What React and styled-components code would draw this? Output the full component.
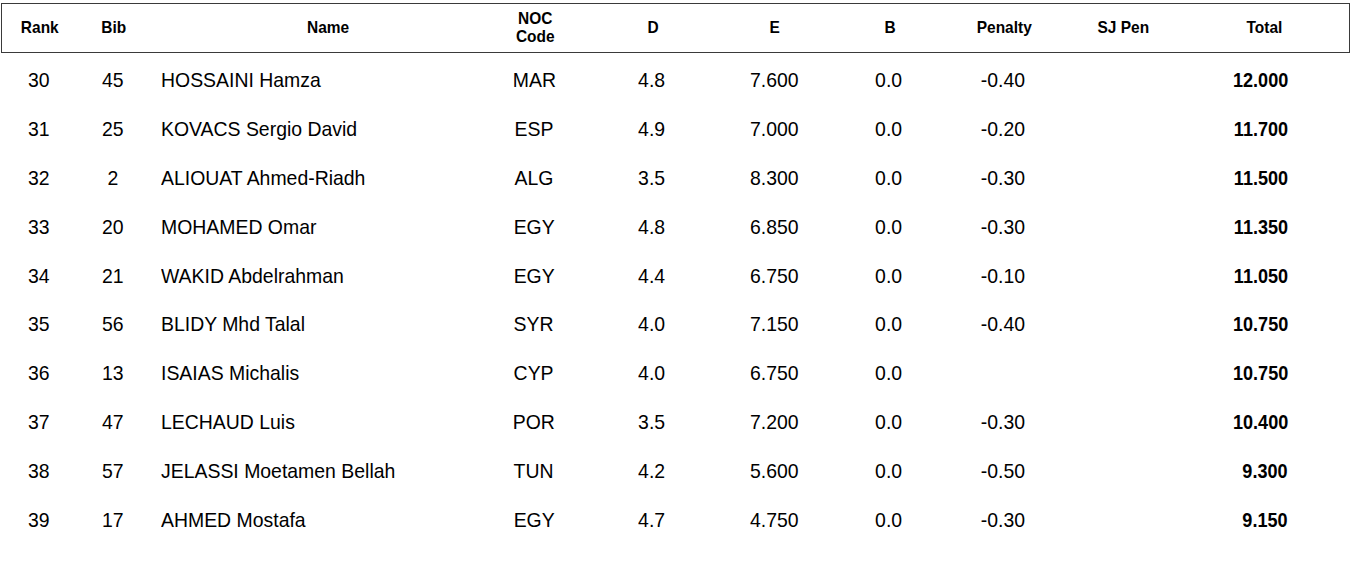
import React from "react";
import styled, { createGlobalStyle } from "styled-components";

const GlobalStyle = createGlobalStyle`
  body {
    margin: 0;
    background: #fff;
    font-family: "Liberation Sans", Arial, sans-serif;
    color: #000;
  }
`;

// column tracks, left to right (px)
const COLUMNS = "76px 72px 356px 58px 178px 66px 164px 64px 174px 1fr";

const results = [
  { rank: 30, bib: 45, name: "HOSSAINI Hamza", noc: "MAR", d: "4.8", e: "7.600", b: "0.0", pen: "-0.40", total: "12.000" },
  { rank: 31, bib: 25, name: "KOVACS Sergio David", noc: "ESP", d: "4.9", e: "7.000", b: "0.0", pen: "-0.20", total: "11.700" },
  { rank: 32, bib: 2, name: "ALIOUAT Ahmed-Riadh", noc: "ALG", d: "3.5", e: "8.300", b: "0.0", pen: "-0.30", total: "11.500" },
  { rank: 33, bib: 20, name: "MOHAMED Omar", noc: "EGY", d: "4.8", e: "6.850", b: "0.0", pen: "-0.30", total: "11.350" },
  { rank: 34, bib: 21, name: "WAKID Abdelrahman", noc: "EGY", d: "4.4", e: "6.750", b: "0.0", pen: "-0.10", total: "11.050" },
  { rank: 35, bib: 56, name: "BLIDY Mhd Talal", noc: "SYR", d: "4.0", e: "7.150", b: "0.0", pen: "-0.40", total: "10.750" },
  { rank: 36, bib: 13, name: "ISAIAS Michalis", noc: "CYP", d: "4.0", e: "6.750", b: "0.0", pen: "", total: "10.750" },
  { rank: 37, bib: 47, name: "LECHAUD Luis", noc: "POR", d: "3.5", e: "7.200", b: "0.0", pen: "-0.30", total: "10.400" },
  { rank: 38, bib: 57, name: "JELASSI Moetamen Bellah", noc: "TUN", d: "4.2", e: "5.600", b: "0.0", pen: "-0.50", total: "9.300" },
  { rank: 39, bib: 17, name: "AHMED Mostafa", noc: "EGY", d: "4.7", e: "4.750", b: "0.0", pen: "-0.30", total: "9.150" },
];

const origins = { left: "left center", right: "right center", center: "center" };

const Page = styled.div`
  padding: 3px 0 0 1px;
  width: 1349px;
`;

const HeaderRow = styled.div`
  display: grid;
  grid-template-columns: ${COLUMNS};
  align-items: center;
  border: 1.5px solid #3a3a3a;
  box-sizing: border-box;
  height: 50px;
`;

const HeadCell = styled.div`
  font-weight: bold;
  font-size: 17px;
  line-height: 18px;
  text-align: ${(p) => p.$align || "center"};
  padding-right: ${(p) => p.$padRight || 0}px;
`;

// narrow face: the report uses a condensed Arial, squeeze the Liberation glyphs
const Narrow = styled.span`
  display: inline-block;
  white-space: nowrap;
  transform: scaleX(${(p) => p.$scale || 0.91});
  transform-origin: ${(p) => origins[p.$align || "center"]};
`;

const Body = styled.div`
  padding-top: 3px;
`;

const Row = styled.div`
  display: grid;
  grid-template-columns: ${COLUMNS};
  align-items: center;
  height: 48.8px;
`;

const Cell = styled.div`
  font-size: 21px;
  white-space: nowrap;
  text-align: ${(p) => p.$align || "center"};
  padding-left: ${(p) => p.$padLeft || 0}px;
  padding-right: ${(p) => p.$padRight || 0}px;
  font-weight: ${(p) => (p.$bold ? "bold" : "normal")};
`;

const Head = ({ children, align, padRight }) => (
  <HeadCell $align={align} $padRight={padRight}>
    <Narrow $align={align}>{children}</Narrow>
  </HeadCell>
);

const Value = ({ children, align, padLeft, padRight, bold }) => (
  <Cell $align={align} $padLeft={padLeft} $padRight={padRight} $bold={bold}>
    <Narrow $align={align} $scale={bold ? 0.86 : 0.925}>
      {children}
    </Narrow>
  </Cell>
);

export default function App() {
  return (
    <>
      <GlobalStyle />
      <Page>
        <HeaderRow>
          <Head>Rank</Head>
          <Head>Bib</Head>
          <Head>Name</Head>
          <Head>
            NOC
            <br />
            Code
          </Head>
          <Head>D</Head>
          <Head>E</Head>
          <Head>B</Head>
          <Head>Penalty</Head>
          <Head>SJ Pen</Head>
          <Head align="right" padRight={67}>
            Total
          </Head>
        </HeaderRow>
        <Body>
          {results.map((r) => (
            <Row key={r.rank}>
              <Value>{r.rank}</Value>
              <Value>{r.bib}</Value>
              <Value align="left" padLeft={12}>
                {r.name}
              </Value>
              <Value>{r.noc}</Value>
              <Value>{r.d}</Value>
              <Value>{r.e}</Value>
              <Value>{r.b}</Value>
              <Value>{r.pen}</Value>
              <Cell />
              <Value align="right" padRight={62} bold>
                {r.total}
              </Value>
            </Row>
          ))}
        </Body>
      </Page>
    </>
  );
}
